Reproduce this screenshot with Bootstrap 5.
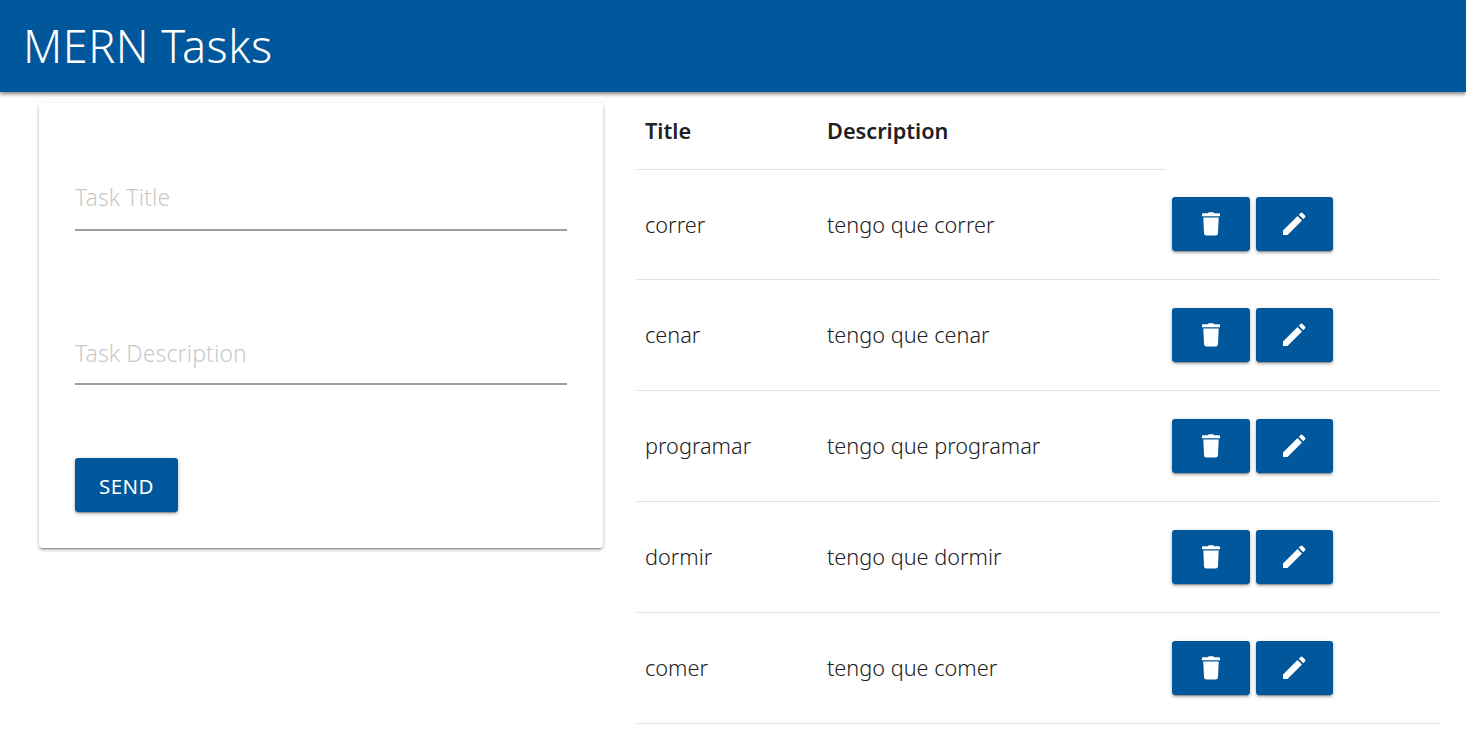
<!DOCTYPE html>
<html lang="en">
<head>
<meta charset="utf-8">
<title>MERN Tasks</title>
<link href="https://cdn.jsdelivr.net/npm/bootstrap@5.3.0/dist/css/bootstrap.min.css" rel="stylesheet">
<style>
:root{--brand:#01579b;--lift:0 3px 1px -2px rgba(0,0,0,.25),0 2px 3px rgba(0,0,0,.2),0 1px 5px rgba(0,0,0,.14);}
html,body{height:756px;overflow:hidden;}
body{font-family:"Noto Sans","Open Sans",sans-serif;color:#212121;background:#fff;}
.topbar{height:92px;background:var(--brand);box-shadow:0 2px 4px rgba(0,0,0,.5);padding:0 23px;}
.brandname{font-size:45px;font-weight:300;color:#fff;letter-spacing:.5px;line-height:92px;margin:0;}
.page-area{padding:11px 27px 0 39px;gap:34px;}
.form-card{width:564px;height:445px;flex:none;border:0;border-radius:4px;box-shadow:var(--lift);padding:0 36px;}
.task-input{display:block;width:100%;border:0;border-bottom:2px solid #9e9e9e;outline:0;background:transparent;font-size:23px;font-weight:300;padding:0;letter-spacing:.1px;}
.task-input::placeholder{color:#c9c9c9;opacity:1;}
.input-one{margin-top:73px;height:55px;padding-bottom:11px;}
.input-two{margin-top:101px;height:53px;padding-bottom:9px;}
.brand-btn{background:var(--brand);color:#fff;border:0;border-radius:3px;box-shadow:var(--lift);height:54px;padding:0;display:inline-flex;align-items:center;justify-content:center;}
.brand-btn:hover,.brand-btn:active{background:var(--brand)!important;color:#fff!important;}
.send-btn{width:103px;margin-top:73px;font-size:20.5px;letter-spacing:.5px;padding-top:3px;}
.trash-btn{width:78px;}
.edit-btn{width:77px;}
.task-wrap{width:802px;flex:none;margin-top:-11px;}
.task-table{table-layout:fixed;width:802px;margin:0;font-size:21.7px;font-weight:300;--bs-table-border-color:#e0e0e0;--bs-table-color:#212121;}
.task-table th{font-weight:600;height:77px;padding:2px 8px 0;vertical-align:middle;color:#212121;}
.task-table td{height:111px;padding:2px 8px 0;vertical-align:middle;}
.task-table tbody tr:first-child td{height:110px;}
.task-table td.act{padding:0 7px;}
.btn-row{gap:6px;}
</style>
</head>
<body>
<header class="topbar"><h1 class="brandname">MERN Tasks</h1></header>
<main class="page-area d-flex align-items-start">
  <form class="form-card card" onsubmit="return false">
    <input class="task-input input-one" placeholder="Task Title" aria-label="Task Title">
    <input class="task-input input-two" placeholder="Task Description" aria-label="Task Description">
    <div><button class="brand-btn btn send-btn" type="submit">SEND</button></div>
  </form>
  <div class="task-wrap">
    <table class="task-table table">
      <colgroup><col style="width:182px"><col style="width:346px"><col style="width:274px"></colgroup>
      <thead><tr><th>Title</th><th>Description</th></tr></thead>
      <tbody id="rows"></tbody>
    </table>
  </div>
</main>
<script>
const trash='<svg width="24" height="24" viewBox="0 0 24 24" fill="#fff" aria-hidden="true"><path d="M9 1.200Q9 .3 10 .3h4q1 0 1 .9h5q1 0 1 1v2.100H3V2.200q0-1 1-1zM4.300 5.500h15.400L19 21q-.1 2.500-2.700 2.500H7.700Q5.100 23.500 5 21z"/></svg>';
const pen='<svg width="24" height="24" viewBox="1 0 24 24" fill="#fff" aria-hidden="true"><path d="M1 18.500 15.500 4 20 8.500 5.500 23H1zM16.800 2.700 18.500 1q1-1 2 0l2.500 2.500q1 1 0 2L21.300 7.200z"/></svg>';
const data=[['correr','tengo que correr'],['cenar','tengo que cenar'],['programar','tengo que programar'],['dormir','tengo que dormir'],['comer','tengo que comer']];
document.getElementById('rows').innerHTML=data.map(d=>`<tr><td>${d[0]}</td><td>${d[1]}</td><td class="act"><div class="d-flex btn-row"><button class="brand-btn btn trash-btn" aria-label="Delete">${trash}</button><button class="brand-btn btn edit-btn" aria-label="Edit">${pen}</button></div></td></tr>`).join('');
</script>
<script src="https://cdn.jsdelivr.net/npm/bootstrap@5.3.0/dist/js/bootstrap.bundle.min.js"></script>
</body>
</html>
